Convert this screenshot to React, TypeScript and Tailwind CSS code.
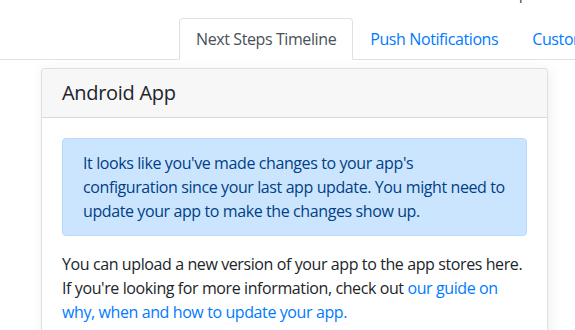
export default function App() {
  return (
    <div
      className="relative h-[330px] w-full overflow-hidden bg-white text-[16px] leading-[24px] tracking-[-0.4px] text-[#212529]"
      style={{ fontFamily: '"Segoe UI", "Open Sans", "Noto Sans", sans-serif' }}
    >
      <div className="absolute left-[519px] top-[-14px] text-[14px] leading-[16px] text-[#333]">p</div>
      <nav className="mt-[18px] flex whitespace-nowrap border-b border-[#dee2e6] pl-[179px]">
        <div className="-mb-px rounded-t-[4px] border border-[#dee2e6] border-b-white bg-white px-4 py-2 text-[#495057]">
          Next Steps Timeline
        </div>
        <div className="-mb-px border border-transparent px-4 py-2 text-[#007bff]">Push Notifications</div>
        <div className="-mb-px border border-transparent px-4 py-2 text-[#007bff]">Customization</div>
      </nav>
      <div className="ml-[41px] mt-2 w-[507px] rounded-[4px] border border-black/[0.125] bg-white shadow-[2px_2px_14px_rgba(0,0,0,0.07)]">
        <div className="rounded-t-[3px] border-b border-black/[0.125] bg-[#f7f7f7] px-5 py-3 text-[20px] leading-[24px] tracking-[-0.3px] text-[#212529]">
          Android App
        </div>
        <div className="p-5">
          <div className="mb-4 rounded-[4px] border border-[#b8daff] bg-[#cce5ff] px-5 py-3 text-[#004085]">
            It looks like you've made changes to your app's configuration since your last app update. You might need to
            update your app to make the changes show up.
          </div>
          <p>
            You can upload a new version of your app to the app stores here. If you're looking for more information,
            check out{' '}
            <a className="text-[#007bff]" href="#">
              our guide on why, when and how to update your app.
            </a>
          </p>
        </div>
      </div>
    </div>
  );
}
